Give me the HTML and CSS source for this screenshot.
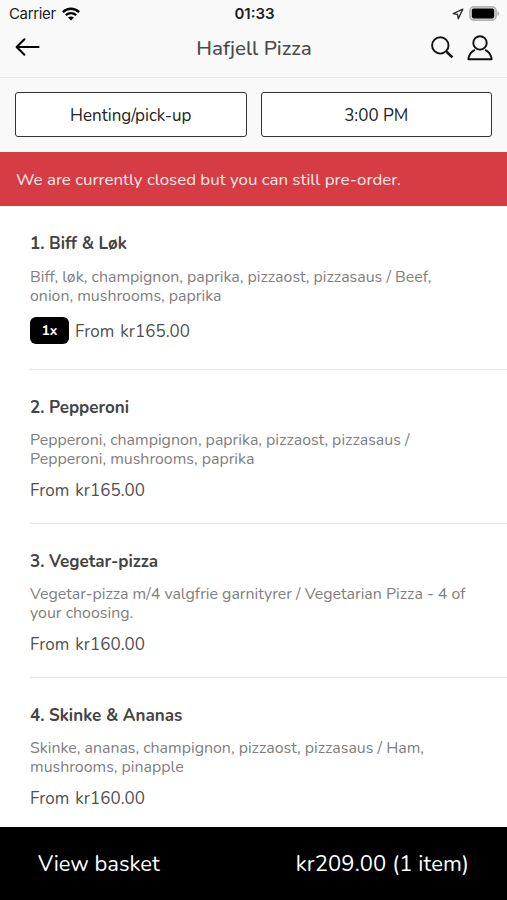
FILE: index.html
```html
<!DOCTYPE html>
<html lang="en">
<head>
<meta charset="utf-8">
<meta name="viewport" content="width=device-width, initial-scale=1">
<title>Hafjell Pizza</title>
<link rel="stylesheet" href="styles.css">
</head>
<body>
<div class="app">
  <header class="header">
    <div class="status">
      <div class="carrier"><span>Carrier</span>
        <svg width="18" height="14" viewBox="0 0 18 14" fill="none" stroke="#000" stroke-width="2.3"><path d="M.9 5.1C5.6.6 12.4.6 17.1 5.1M3.8 8.2c3-2.8 7.4-2.8 10.4 0"/><path d="M9 13.4 6 10.5c1.8-1.5 4.2-1.5 6 0z" fill="#000" stroke="none"/></svg>
      </div>
      <div class="clock">01:33</div>
      <div class="indicators">
        <svg width="12" height="12" viewBox="0 0 12 12" fill="none" stroke="#333" stroke-width="1.4" stroke-linejoin="round"><path d="M10.8 1.1 1.2 5.6l4.3.9.8 4.2z"/></svg>
        <svg width="31" height="15" viewBox="0 0 31 15"><rect x=".9" y=".9" width="26.2" height="13.2" rx="3.8" fill="#ddd" stroke="#b5b5b5" stroke-width="1.6"/><rect x="2.8" y="2.6" width="22.4" height="9.8" rx="1.8" fill="#000"/><path d="M28.4 5v5q1.8-.8 1.8-2.5T28.4 5z" fill="#b5b5b5"/></svg>
      </div>
    </div>
    <nav class="nav">
      <svg class="back" width="25" height="18" viewBox="0 0 25 18" fill="none" stroke="#000" stroke-width="2" stroke-linecap="round" stroke-linejoin="round"><path d="M9.4 1.2 1.6 9l7.8 7.8M1.8 9h21.8"/></svg>
      <h1 class="heading">Hafjell Pizza</h1>
      <div class="actions">
        <svg width="24" height="24" viewBox="0 0 24 24" fill="none" stroke="#111" stroke-width="1.9"><circle cx="9.3" cy="9.4" r="8.2"/><path d="m15.1 15.2 1.8 1.8"/><path d="m16.2 16.4 5.2 5" stroke-width="2.7"/></svg>
        <svg width="26" height="26" viewBox="0 0 26 26" fill="none" stroke="#111" stroke-width="1.9" stroke-linejoin="round"><circle cx="13" cy="7.9" r="6.7"/><path d="M7.9 14.9C3.9 16.9 1.8 20 1.4 24.2h23.2c-.4-4.2-2.5-7.3-6.5-9.3"/></svg>
      </div>
    </nav>
  </header>
  <div class="options">
    <button class="option">Henting/pick-up</button>
    <button class="option">3:00 PM</button>
  </div>
  <div class="notice">We are currently closed but you can still pre-order.</div>
  <main class="menu">
    <article class="item">
      <h2 class="name">1. Biff &amp; Løk</h2>
      <p class="desc">Biff, løk, champignon, paprika, pizzaost, pizzasaus / Beef,<br>onion, mushrooms, paprika</p>
      <div class="price ordered"><span class="count">1x</span><span class="amount">From kr165.00</span></div>
    </article>
    <article class="item">
      <h2 class="name">2. Pepperoni</h2>
      <p class="desc">Pepperoni, champignon, paprika, pizzaost, pizzasaus /<br>Pepperoni, mushrooms, paprika</p>
      <div class="price">From kr165.00</div>
    </article>
    <article class="item">
      <h2 class="name">3. Vegetar-pizza</h2>
      <p class="desc">Vegetar-pizza m/4 valgfrie garnityrer / Vegetarian Pizza - 4 of<br>your choosing.</p>
      <div class="price">From kr160.00</div>
    </article>
    <article class="item">
      <h2 class="name">4. Skinke &amp; Ananas</h2>
      <p class="desc">Skinke, ananas, champignon, pizzaost, pizzasaus / Ham,<br>mushrooms, pinapple</p>
      <div class="price">From kr160.00</div>
    </article>
  </main>
  <footer class="basket"><span>View basket</span><span class="total">kr209.00 (1 item)</span></footer>
</div>
</body>
</html>
```
FILE: styles.css
```css
* { box-sizing: border-box; }
body { margin: 0; background: #fff; color: #444; font-family: Nunito, Lato, "Open Sans", sans-serif; font-size: 17px; }
h1, h2, p { margin: 0; }
svg { display: block; flex: none; }
.app { height: 900px; display: flex; flex-direction: column; overflow: hidden; }

.header { height: 78px; flex: none; background: #f9f9f9; border-bottom: 1px solid #e6e6e6; }
.status { height: 27px; display: grid; grid-template-columns: 1fr auto 1fr; align-items: center; padding: 0 7px 0 9px; color: #222; font-family: Inter, "Liberation Sans", sans-serif; font-size: 15px; }
.carrier { display: flex; align-items: center; gap: 6px; letter-spacing: -.35px; }
.clock { font-weight: 600; }
.indicators { display: flex; justify-content: flex-end; align-items: center; gap: 5px; }
.nav { height: 41px; display: grid; grid-template-columns: 1fr auto 1fr; align-items: center; padding: 0 14px 0 15px; }
.back { margin-bottom: 2px; }
.heading { font-size: 20.6px; line-height: 28px; font-weight: 500; color: #4a4a4a; }
.actions { display: flex; justify-content: flex-end; align-items: center; gap: 12px; }

.options { height: 74px; flex: none; display: grid; grid-template-columns: 1fr 1fr; gap: 14px; padding: 14px 15px 15px; background: #f9f9f9; }
.option { border: 1.5px solid #333; border-radius: 3px; background: #fff; color: #222; font: inherit; padding: 2px 0 0; }
.notice { height: 54px; flex: none; display: flex; align-items: center; padding: 1px 16px 0; background: #d53c43; color: #ffe9e7; font-size: 16.9px; }

.menu { flex: 1; min-height: 0; overflow: hidden; padding: 1px 0 0 30px; }
.item { padding: 27px 0 22px; border-bottom: 1px solid #e5e5e5; }
.name { font-size: 17px; line-height: 22px; font-weight: 700; color: #444; }
.item:first-child .name { margin: -1px 0 14px; }
.desc { margin: 12px 0 11px; font-size: 15.93px; line-height: 18.5px; color: #808080; white-space: nowrap; }
.item:first-child .desc { margin-top: 0; }
.price { height: 22px; display: flex; align-items: center; gap: 6px; color: #505050; word-spacing: 1.5px; letter-spacing: .05px; }
.ordered { height: 27px; margin: 11px 0 3px; }
.item:first-child .name + .desc { margin-top: -1px; margin-bottom: 12px; }
.count { width: 39px; height: 27px; display: flex; align-items: center; justify-content: center; border-radius: 6px; background: #000; color: #fff; font-size: 14px; font-weight: 700; }
.amount { padding-top: 1px; }

.basket { height: 73px; flex: none; display: flex; align-items: center; justify-content: space-between; padding: 0 38px; background: #000; color: #fff; font-size: 22px; }
.total { letter-spacing: .1px; }
```
